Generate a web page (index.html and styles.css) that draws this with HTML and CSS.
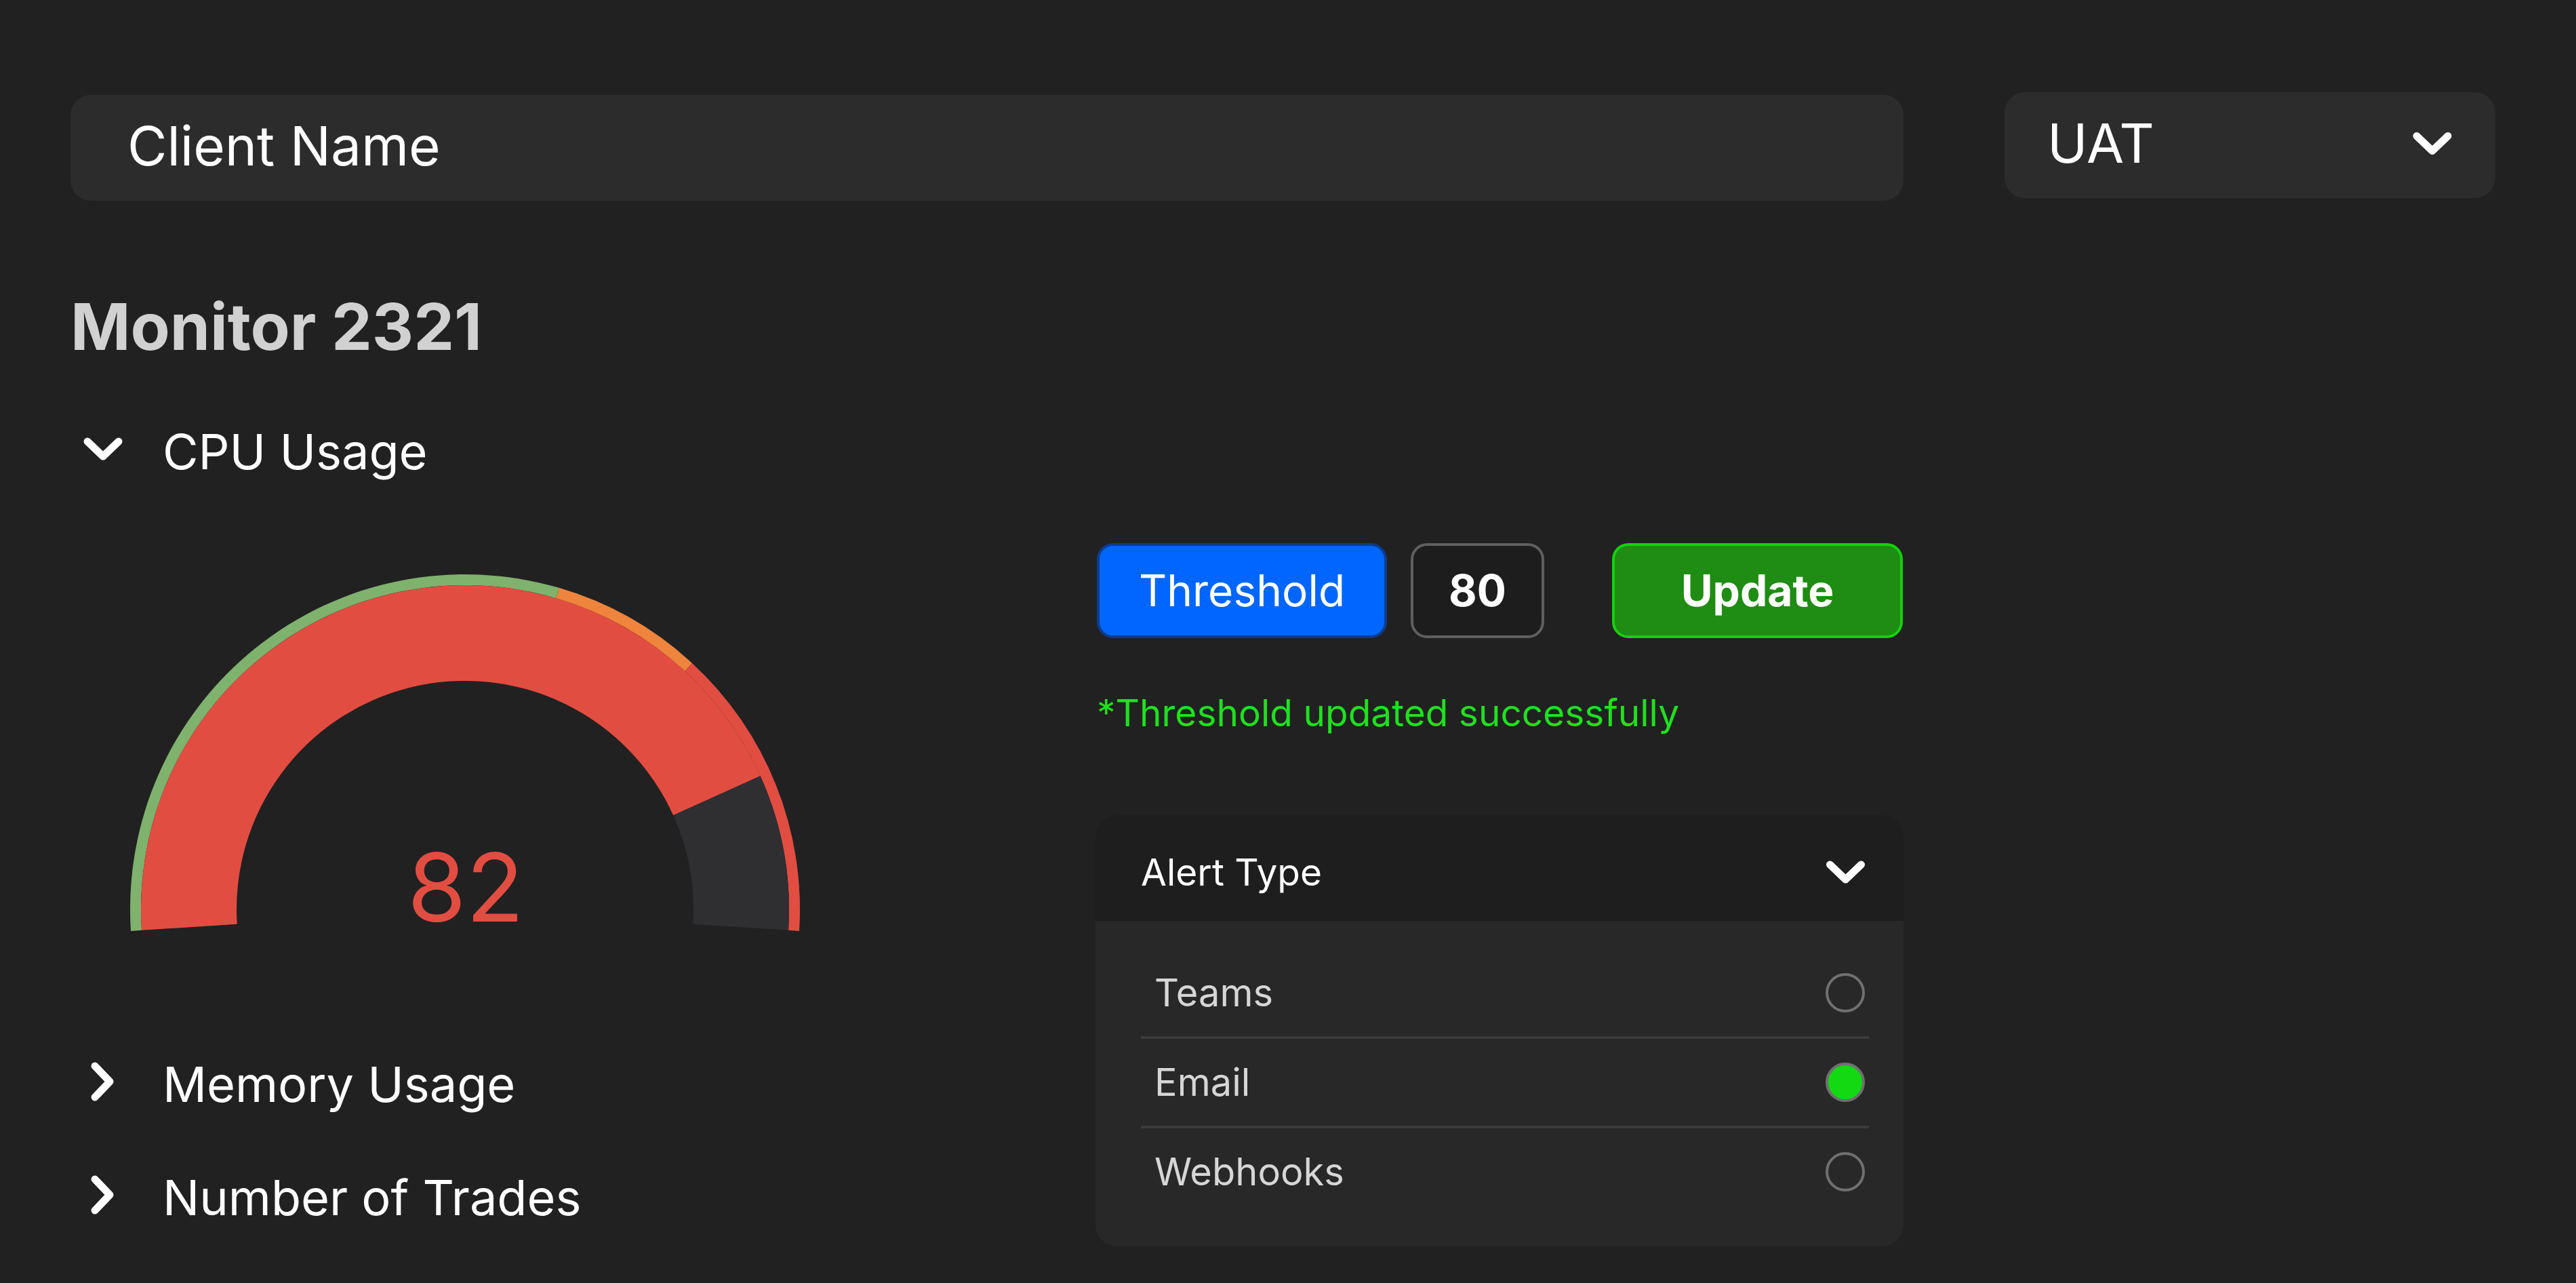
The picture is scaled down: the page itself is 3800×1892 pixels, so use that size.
FILE: index.html
```html
<!DOCTYPE html>
<html lang="en">
<head>
<meta charset="utf-8">
<title>Monitor 2321</title>
<link rel="stylesheet" href="styles.css">
</head>
<body>
<div class="page">
  <div class="topbar">
    <div class="client">Client Name</div>
    <div class="env">
      <span>UAT</span>
      <svg class="chev-down" viewBox="0 0 58 34"><polyline class="chev-line" points="6,6 29,28 52,6"/></svg>
    </div>
  </div>

  <h1 class="title">Monitor 2321</h1>

  <div class="content">
    <div class="left">
      <div class="acc-row">
        <span class="acc-icon"><svg class="chev-down" viewBox="0 0 58 34"><polyline class="chev-line" points="6,6 29,28 52,6"/></svg></span>
        <span class="acc-label">CPU Usage</span>
      </div>

      <svg class="gauge" viewBox="0 0 1000 570">
        <path class="g-green" d="M 7.02 535.88 A 494 494 0 0 1 638.65 29.85 L 634.16 45.21 A 478 478 0 0 0 23.0 534.85 Z"/>
        <path class="g-orange" d="M 638.65 29.85 A 494 494 0 0 1 835.02 140.95 L 824.18 152.71 A 478 478 0 0 0 634.16 45.21 Z"/>
        <path class="g-red" d="M 835.02 140.95 A 494 494 0 0 1 992.98 535.88 L 977.0 534.85 A 478 478 0 0 0 824.18 152.71 Z"/>
        <path class="g-red" d="M 23.0 534.85 A 478 478 0 0 1 935.65 307.29 L 807.15 365.32 A 337 337 0 0 0 163.70 525.75 Z"/>
        <path class="g-empty" d="M 935.65 307.29 A 478 478 0 0 1 977.0 534.85 L 836.30 525.75 A 337 337 0 0 0 807.15 365.32 Z"/>
        <text class="g-value" x="501" y="522">82</text>
      </svg>

      <div class="acc-row acc-memory">
        <span class="acc-icon"><svg class="chev-right" viewBox="0 0 36 58"><polyline class="chev-line" points="6,6 28,29 6,52"/></svg></span>
        <span class="acc-label">Memory Usage</span>
      </div>
      <div class="acc-row acc-trades">
        <span class="acc-icon"><svg class="chev-right" viewBox="0 0 36 58"><polyline class="chev-line" points="6,6 28,29 6,52"/></svg></span>
        <span class="acc-label">Number of Trades</span>
      </div>
    </div>

    <div class="right">
      <div class="thresh-row">
        <div class="btn btn-threshold">Threshold</div>
        <div class="btn value-box">80</div>
        <div class="btn btn-update">Update</div>
      </div>
      <p class="success">*Threshold updated successfully</p>

      <div class="card">
        <div class="card-head">
          <span>Alert Type</span>
          <svg class="chev-card" viewBox="0 0 58 34"><polyline class="chev-line" points="6,6 29,28 52,6"/></svg>
        </div>
        <div class="card-body">
          <div class="opt"><span>Teams</span><span class="radio"></span></div>
          <div class="opt"><span>Email</span><span class="radio on"></span></div>
          <div class="opt"><span>Webhooks</span><span class="radio"></span></div>
        </div>
      </div>
    </div>
  </div>
</div>
</body>
</html>
```

FILE: styles.css
```css
* { box-sizing: border-box; margin: 0; padding: 0; }

html, body { background: #212121; }

body {
  width: 3800px;
  height: 1892px;
  overflow: hidden;
  font-family: Inter, "Noto Sans", sans-serif;
  color: #ffffff;
}

.page { padding: 136px 0 0 104px; }

/* top bar */
.topbar {
  display: flex;
  align-items: flex-start;
  gap: 149px;
}

.client {
  margin-top: 4px;
  width: 2704px;
  height: 156px;
  background: #2c2c2c;
  border-radius: 30px;
  display: flex;
  align-items: center;
  padding: 0 0 7px 84px;
  font-size: 80px;
  line-height: 1;
}

.env {
  width: 724px;
  height: 156px;
  background: #2c2c2c;
  border-radius: 30px;
  display: flex;
  align-items: center;
  justify-content: space-between;
  padding: 0 64px 6px 63px;
  font-size: 80px;
  line-height: 1;
}

.env .chev-down { width: 58px; height: 35px; }

.chev-line {
  fill: none;
  stroke: #ffffff;
  stroke-width: 11;
  stroke-linecap: round;
  stroke-linejoin: round;
}

/* title */
.title {
  margin-top: 138px;
  font-size: 95px;
  line-height: 96px;
  font-weight: 700;
  color: #d1d1d1;
}

/* content */
.content {
  display: flex;
  align-items: flex-start;
  margin-top: 96px;
}

.left {
  flex: none;
  width: 1512px;
}

.acc-row {
  display: flex;
  align-items: center;
  height: 80px;
  font-size: 72px;
  line-height: 80px;
}

.acc-icon {
  flex: none;
  width: 60px;
  height: 60px;
  margin: 0 58px 9px 18px;
  display: flex;
  align-items: center;
  justify-content: center;
}

.chev-down { width: 58px; height: 34px; display: block; }
.chev-right { width: 36px; height: 58px; display: block; }

.gauge {
  display: block;
  width: 1000px;
  height: 570px;
  margin: 131px 0 0 82px;
}

.g-green { fill: #7eb26d; }
.g-orange { fill: #ef843c; }
.g-red { fill: #e24d42; }
.g-empty { fill: #2f2f32; }

.g-value {
  fill: #e24d42;
  font-family: Inter, "Noto Sans", sans-serif;
  font-size: 140px;
  text-anchor: middle;
}

.acc-memory { margin-top: 152px; }
.acc-trades { margin-top: 87px; }

/* right column */
.right {
  flex: none;
  width: 1192px;
  margin-top: 175px;
}

.thresh-row {
  display: flex;
  height: 140px;
}

.btn {
  height: 140px;
  border-radius: 24px;
  border: 4px solid transparent;
  display: flex;
  align-items: center;
  justify-content: center;
  font-size: 64px;
  line-height: 1;
  color: #ffffff;
}

.btn-threshold {
  width: 428px;
  margin-left: 2px;
  background: #0066ff;
  border-color: #0b3d8e;
}

.value-box {
  width: 197px;
  margin-left: 35px;
  background: #1d1d1d;
  border-color: #5f5f5f;
  font-weight: 700;
}

.btn-update {
  width: 429px;
  margin-left: 100px;
  background: #1f8c13;
  border-color: #14d10c;
  font-weight: 700;
}

.success {
  margin-top: 76px;
  margin-left: 2px;
  font-size: 55px;
  line-height: 68px;
  color: #1fe01f;
}

.card {
  margin-top: 117px;
  width: 1192px;
  border-radius: 32px;
  overflow: hidden;
  background: #282828;
}

.card-head {
  height: 156px;
  background: #1e1e1e;
  display: flex;
  align-items: center;
  justify-content: space-between;
  padding: 12px 56px 0 67px;
  font-size: 55px;
  line-height: 1;
}

.chev-card { width: 59px; height: 34px; display: block; }

.card-body {
  padding: 42px 51px 46px 67px;
}

.opt {
  height: 132px;
  border-bottom: 4px solid #3b3b3b;
  display: flex;
  align-items: center;
  justify-content: space-between;
  padding: 0 6px 0 20px;
  font-size: 56px;
  line-height: 1;
  color: #d6d6d6;
}

.opt:last-child {
  height: 128px;
  border-bottom: none;
}

.radio {
  width: 58px;
  height: 58px;
  border-radius: 50%;
  border: 4px solid #707070;
}

.radio.on { background: #12d912; }
```
